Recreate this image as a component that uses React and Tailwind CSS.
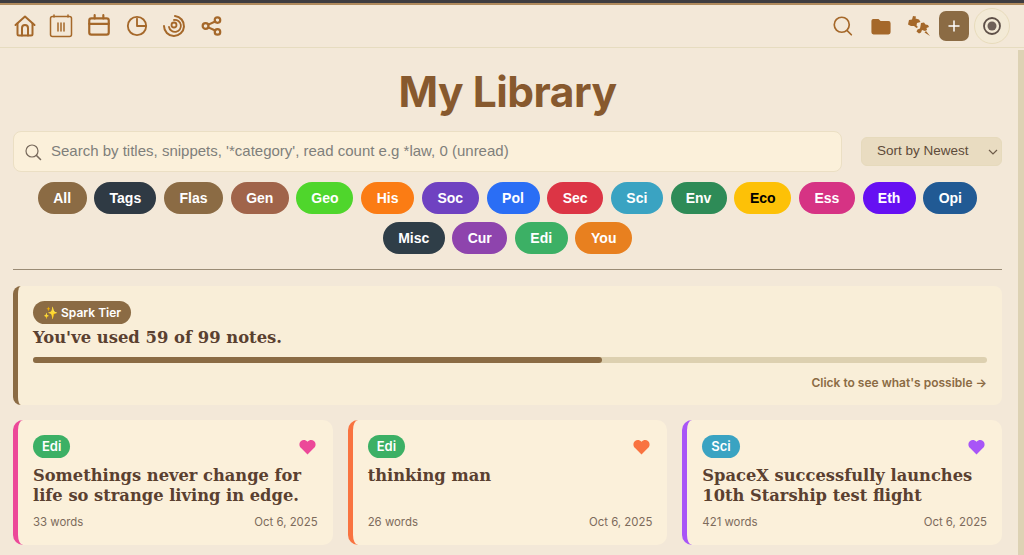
import React from "react";

const c = "#a5682a";
const Ic = ({ w = 24, children, cls = "" }) => (
  <svg width={w} height={w} viewBox="0 0 24 24" fill="none" stroke={c} strokeWidth="2" strokeLinecap="round" strokeLinejoin="round" className={cls}>{children}</svg>
);

const pills1 = [
  ["All", "#8b6b44", "w-[49px]"], ["Tags", "#2f3a44", "w-[62px]"], ["Flas", "#8b6b44", "w-[59px]"], ["Gen", "#a0644a", "w-[58px]"],
  ["Geo", "#4fd62c", "w-[57px]"], ["His", "#fb7c14", "w-[53px]"], ["Soc", "#6f42c1", "w-[57px]"], ["Pol", "#2a6ef5", "w-[53px]"],
  ["Sec", "#dc3545", "w-[56px]"], ["Sci", "#3aa3c2", "w-[52px]"], ["Env", "#2e8b57", "w-[56px]"], ["Eco", "#fdc107", "w-[57px]"],
  ["Ess", "#d63384", "w-[56px]"], ["Eth", "#6610f2", "w-[53px]"], ["Opi", "#215a94", "w-[54px]"],
];
const pills2 = [
  ["Misc", "#2f3e48", "w-[62px]"], ["Cur", "#8e44ad", "w-[55px]"], ["Edi", "#3cb065", "w-[53px]"], ["You", "#e8801f", "w-[57px]"],
];

const Pill = ({ p }) => (
  <span style={{ backgroundColor: p[1], color: p[0] === "Eco" ? "#000" : "#fff" }}
    className={`${p[2]} h-8 rounded-full flex items-center justify-center text-[14px] font-bold font-['Liberation_Sans',sans-serif]`}>{p[0]}</span>
);

const Heart = ({ color }) => (
  <svg width="17" height="16" viewBox="0 0 24 22"><path fill={color} d="M12 21.5 2.6 12.2C-.2 9.3 0 4.9 2.9 2.5 5.6.3 9.5.8 12 3.6 14.5.8 18.4.3 21.1 2.5c2.9 2.4 3.1 6.8.3 9.7z" /></svg>
);

const Card = ({ border, tag, tagBg, heart, title, words }) => (
  <div style={{ borderLeftColor: border }} className="flex-1 h-[125px] rounded-[10px] border-l-[5px] bg-[#fbf0da] pl-[15px] pr-[15px] pt-[15px] flex flex-col">
    <div className="flex justify-between items-start">
      <span style={{ backgroundColor: tagBg }} className="h-[23px] px-[9px] rounded-full flex items-center text-white text-[13px] font-semibold font-['Inter',sans-serif]">{tag}</span>
      <span className="mt-[4px] mr-[2px]"><Heart color={heart} /></span>
    </div>
    <div className="mt-[8px] h-[40px] text-[#5a4030] text-[16.3px] leading-[20px] font-bold font-['DejaVu_Serif',serif]">{title}</div>
    <div className="mt-[9px] flex justify-between text-[11.4px] leading-[14px] text-[#7d6b5c] font-['Inter',sans-serif]">
      <span>{words}</span><span>Oct 6, 2025</span>
    </div>
  </div>
);

export default function App() {
  return (
    <div className="w-[1024px] h-[555px] overflow-hidden bg-[#f3e8d8] relative font-['Inter',sans-serif]">
      <div className="h-[3px] bg-[#3e3c40]" />
      <div className="h-[2px] bg-[#b08a5c]" />
      <header className="h-[43px] flex items-center justify-between border-b border-[#e6dcc0] pl-[13px] pr-[14px]">
        <div className="flex items-center">
          <Ic w={24}><path d="M2.5 11 12 2.5 21.5 11" /><path d="M4.5 9.5V20a1.5 1.5 0 0 0 1.5 1.5h12a1.5 1.5 0 0 0 1.5-1.5V9.5" /><path d="M9 21.5V14a3 3 0 0 1 6 0v7.5" /></Ic>
          <Ic w={24} cls="ml-[12px]"><rect x="1.5" y="2.5" width="21" height="20" rx="2" strokeWidth="1.5" /><path d="M5 1v2M19 1v2M9 9v8M12 9v8M15 9v8" strokeWidth="1.5" /></Ic>
          <Ic w={26} cls="ml-[13px]"><rect x="3" y="5" width="18" height="15" rx="2" /><path d="M3 10h18M8 2v3M16 2v3" /></Ic>
          <Ic w={22} cls="ml-[14px]"><circle cx="12" cy="12" r="10" /><path d="M12 4v8h9" /></Ic>
          <Ic w={24} cls="ml-[14px]"><path d="M13 2a10 10 0 1 1-11 10" /><path d="M12 6a6 6 0 1 1-5 7" strokeWidth="1.8" /><circle cx="12" cy="11" r="2.5" strokeWidth="1.8" /></Ic>
          <Ic w={22} cls="ml-[15px]"><circle cx="5" cy="12" r="3.2" strokeWidth="2.4" /><circle cx="18" cy="5.5" r="3" strokeWidth="2.4" /><circle cx="18" cy="18.5" r="3" strokeWidth="2.4" /><path d="m8 10.5 7.5-3.5M8 13.5l7.5 3.5" strokeWidth="2.4" /></Ic>
        </div>
        <div className="flex items-center">
          <Ic w={20} cls="mr-[18px]"><circle cx="10.5" cy="10.5" r="9" /><path d="m17 17.5 5 5" /></Ic>
          <svg width="20" height="17" viewBox="0 0 24 20" className="mr-[17px]"><path fill={c} d="M2.5 1H9l2.5 2.5H21A2.5 2.5 0 0 1 23.5 6v11a2.5 2.5 0 0 1-2.5 2.5H3A2.5 2.5 0 0 1 .5 17V3a2.5 2.5 0 0 1 2-2z" /></svg>
          <svg width="22" height="20" viewBox="0 0 22 20" className="mr-[9px]"><path fill={c} d="M5 0l3 .5L7.5 2.5 11 3.5 12.5 6 9 7 8.5 9.5 10 11l-1.5 1L6 10H3L0 8.5 1 4l3-.5zM13 7l3-.5 1.500 2 2.500.5 1 2-2.500 1 .5 2-2 1-3-1-1 2.500-2 1-2.500-2 1-2 2.500-1 .5-2.500z" /><path fill={c} d="M18 15l4 5-5.500-3.500z" /></svg>
          <div className="w-[30px] h-[30px] rounded-[7px] bg-[#8b6b44] flex items-center justify-center text-white">
            <svg width="12" height="12" viewBox="0 0 12 12" stroke="#fff" strokeWidth="1.5" strokeLinecap="round"><path d="M6 1v10M1 6h10" /></svg>
          </div>
          <div className="w-[36px] h-[36px] ml-[5px] rounded-full bg-[#f3ead6] border border-[#e8dcbc] flex items-center justify-center">
            <svg width="20" height="20" viewBox="0 0 20 20" fill="none"><circle cx="10" cy="10" r="8" stroke="#5e5048" strokeWidth="1.8" /><circle cx="10" cy="10" r="4.5" fill="#6e6058" /></svg>
          </div>
        </div>
      </header>
      <div className="absolute right-0 top-[50px] bottom-0 w-[6px] bg-[#ddd2b4]" />
      <main className="pl-[13px] w-[1002px]">
        <h1 className="mt-[14px] h-[60px] text-center text-[42.5px] leading-[60px] font-bold text-[#87592e] -tracking-[0.5px]">My Library</h1>
        <div className="mt-[9px] flex items-center justify-between">
          <div className="w-[829px] h-[41px] rounded-[8px] border border-[#ebdfc4] bg-[#fbf0da] flex items-center pl-[10px]">
            <svg width="18" height="18" viewBox="0 0 18 18" fill="none" stroke="#77695c" strokeWidth="1.2" strokeLinecap="round"><circle cx="8" cy="8" r="6" /><path d="m12.5 12.5 4 4" strokeWidth="1.6" /></svg>
            <span className="ml-[9px] text-[15px] text-[#7f7f7b] font-['Liberation_Sans',sans-serif]">Search by titles, snippets, '*category', read count e.g *law, 0 (unread)</span>
          </div>
          <div className="w-[141px] h-[29px] rounded-[6px] border border-[#e6dabc] bg-[#e9dcc1] relative flex items-center pl-[15px] text-[13.5px] text-[#5e4b3a] font-['Liberation_Sans',sans-serif]">
            Sort by Newest
            <svg width="10" height="6" viewBox="0 0 10 6" fill="none" stroke="#6e5c4a" strokeWidth="1.2" className="absolute right-[3px] top-[11px]"><path d="m1 1 4 4 4-4" /></svg>
          </div>
        </div>
        <div className="mt-[10px] flex justify-center gap-[7.7px]">{pills1.map((p) => <Pill key={p[0]} p={p} />)}</div>
        <div className="mt-[8px] flex justify-center gap-[7.5px]">{pills2.map((p) => <Pill key={p[0]} p={p} />)}</div>
        <div className="mt-[15px] h-px bg-[#9a8b75]" />
        <section className="mt-[16px] h-[119px] rounded-[8px] border-l-[5px] border-[#8b6b44] bg-[#f9eed8] pl-[15px] pr-[15px] pt-[15px]">
          <span className="flex w-fit h-[23px] rounded-full bg-[#8b6b44] pl-[10px] pr-[10px] items-center text-white text-[12px] font-semibold">✨ Spark Tier</span>
          <div className="mt-[2px] text-[#5a4030] text-[16.4px] leading-[24px] font-bold font-['DejaVu_Serif',serif]">You've used 59 of 99 notes.</div>
          <div className="mt-[7px] h-[6px] rounded-full bg-[#ddd0b0]">
            <div className="h-full w-[569px] rounded-full bg-[#8b6b44]" />
          </div>
          <div className="mt-[12px] text-right text-[12px] leading-[16px] font-semibold text-[#8b6b44]">Click to see what's possible →</div>
        </section>
        <div className="mt-[15px] flex gap-[15px]">
          <Card border="#ec4899" tag="Edi" tagBg="#3cb065" heart="#ec4899" title="Somethings never change for life so strange living in edge." words="33 words" />
          <Card border="#f97340" tag="Edi" tagBg="#3cb065" heart="#f97340" title="thinking man" words="26 words" />
          <Card border="#a855f7" tag="Sci" tagBg="#3aa3c2" heart="#a855f7" title="SpaceX successfully launches 10th Starship test flight" words="421 words" />
        </div>
      </main>
    </div>
  );
}
